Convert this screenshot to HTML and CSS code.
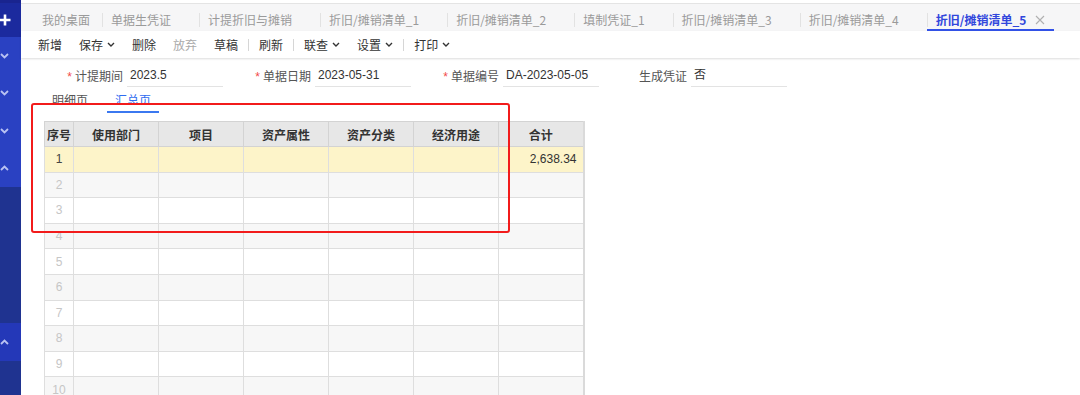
FILE: index.html
```html
<!DOCTYPE html>
<html lang="zh-CN">
<head>
<meta charset="utf-8">
<title>折旧/摊销清单_5</title>
<link rel="stylesheet" href="styles.css">
</head>
<body>
<div class="app">
  <aside class="sidebar">
    <div class="sb-strip"></div>
    <div class="sb-top">
      <svg class="sb-plus" width="12" height="12" viewBox="0 0 12 12"><path d="M5 0.5V11.5M-0.5 6H10.5" stroke="#fff" stroke-width="2.6" fill="none"/></svg>
    </div>
    <div class="sb-bright sb-main">
      <div class="sb-item"><svg width="10" height="6" viewBox="0 0 10 6"><polyline points="1,1 4.5,4.5 8,1" stroke="#b9c2f2" stroke-width="1.8" fill="none"/></svg></div>
      <div class="sb-item"><svg width="10" height="6" viewBox="0 0 10 6"><polyline points="1,1 4.5,4.5 8,1" stroke="#b9c2f2" stroke-width="1.8" fill="none"/></svg></div>
      <div class="sb-item"><svg width="10" height="6" viewBox="0 0 10 6"><polyline points="1,1 4.5,4.5 8,1" stroke="#b9c2f2" stroke-width="1.8" fill="none"/></svg></div>
      <div class="sb-item"><svg width="10" height="6" viewBox="0 0 10 6"><polyline points="1,5 4.5,1.5 8,5" stroke="#b9c2f2" stroke-width="1.8" fill="none"/></svg></div>
    </div>
    <div class="sb-dark sb-gap"></div>
    <div class="sb-bright sb-one">
      <svg width="10" height="6" viewBox="0 0 10 6"><polyline points="1,5 4.5,1.5 8,5" stroke="#b9c2f2" stroke-width="1.8" fill="none"/></svg>
    </div>
    <div class="sb-dark sb-rest"></div>
  </aside>

  <main class="main">
    <nav class="tabbar">
      <div class="tab tab-home">我的桌面</div>
      <div class="tab">单据生凭证<span class="tab-x"></span></div>
      <div class="tab">计提折旧与摊销<span class="tab-x"></span></div>
      <div class="tab">折旧/摊销清单_1<span class="tab-x"></span></div>
      <div class="tab">折旧/摊销清单_2<span class="tab-x"></span></div>
      <div class="tab">填制凭证_1<span class="tab-x"></span></div>
      <div class="tab">折旧/摊销清单_3<span class="tab-x"></span></div>
      <div class="tab">折旧/摊销清单_4<span class="tab-x"></span></div>
      <div class="tab tab-active">折旧/摊销清单_5<span class="tab-x"><svg width="10" height="10" viewBox="0 0 10 10"><path d="M1 1L9 9M9 1L1 9" stroke="#b0b0b0" stroke-width="1.1" fill="none"/></svg></span></div>
    </nav>

    <div class="toolbar">
      <span class="tb-btn">新增</span>
      <span class="tb-btn">保存<svg class="chev" width="8" height="5" viewBox="0 0 8 5"><polyline points="1,1 4,4 7,1" stroke="#333" stroke-width="1.4" fill="none"/></svg></span>
      <span class="tb-btn">删除</span>
      <span class="tb-btn tb-disabled">放弃</span>
      <span class="tb-btn">草稿</span>
      <span class="tb-sep"></span>
      <span class="tb-btn">刷新</span>
      <span class="tb-sep"></span>
      <span class="tb-btn">联查<svg class="chev" width="8" height="5" viewBox="0 0 8 5"><polyline points="1,1 4,4 7,1" stroke="#333" stroke-width="1.4" fill="none"/></svg></span>
      <span class="tb-btn">设置<svg class="chev" width="8" height="5" viewBox="0 0 8 5"><polyline points="1,1 4,4 7,1" stroke="#333" stroke-width="1.4" fill="none"/></svg></span>
      <span class="tb-sep"></span>
      <span class="tb-btn">打印<svg class="chev" width="8" height="5" viewBox="0 0 8 5"><polyline points="1,1 4,4 7,1" stroke="#333" stroke-width="1.4" fill="none"/></svg></span>
    </div>

    <section class="content">
      <div class="form-row">
        <div class="field"><label class="f-label"><span class="req">*</span>计提期间</label><div class="f-input">2023.5</div></div>
        <div class="field"><label class="f-label"><span class="req">*</span>单据日期</label><div class="f-input">2023-05-31</div></div>
        <div class="field"><label class="f-label"><span class="req">*</span>单据编号</label><div class="f-input">DA-2023-05-05</div></div>
        <div class="field"><label class="f-label">生成凭证</label><div class="f-input">否</div></div>
      </div>

      <div class="subtabs">
        <div class="subtab"><span class="st-label">明细页</span></div>
        <div class="subtab subtab-active"><span class="st-label">汇总页</span></div>
      </div>

      <table class="grid">
        <colgroup>
          <col class="c-no"><col class="c-w"><col class="c-w"><col class="c-w"><col class="c-w"><col class="c-w"><col class="c-w">
        </colgroup>
        <thead>
          <tr><th>序号</th><th>使用部门</th><th>项目</th><th>资产属性</th><th>资产分类</th><th>经济用途</th><th>合计</th></tr>
        </thead>
        <tbody>
          <tr class="r-sel"><td class="no">1</td><td></td><td></td><td></td><td></td><td></td><td class="num">2,638.34</td></tr>
          <tr><td class="no">2</td><td></td><td></td><td></td><td></td><td></td><td></td></tr>
          <tr><td class="no">3</td><td></td><td></td><td></td><td></td><td></td><td></td></tr>
          <tr><td class="no">4</td><td></td><td></td><td></td><td></td><td></td><td></td></tr>
          <tr><td class="no">5</td><td></td><td></td><td></td><td></td><td></td><td></td></tr>
          <tr><td class="no">6</td><td></td><td></td><td></td><td></td><td></td><td></td></tr>
          <tr><td class="no">7</td><td></td><td></td><td></td><td></td><td></td><td></td></tr>
          <tr><td class="no">8</td><td></td><td></td><td></td><td></td><td></td><td></td></tr>
          <tr><td class="no">9</td><td></td><td></td><td></td><td></td><td></td><td></td></tr>
          <tr><td class="no">10</td><td></td><td></td><td></td><td></td><td></td><td></td></tr>
          <tr><td class="no">11</td><td></td><td></td><td></td><td></td><td></td><td></td></tr>
        </tbody>
      </table>
    </section>

    <div class="annot-box"></div>
  </main>
</div>
</body>
</html>
```

FILE: styles.css
```css
* { box-sizing: border-box; }
html, body {
  margin: 0;
  padding: 0;
  height: 395px;
  overflow: hidden;
  background: #fff;
}
body {
  font-family: "Liberation Sans", "Noto Sans CJK SC", sans-serif;
  font-size: 12px;
  color: #333;
}
.app {
  display: flex;
  height: 395px;
}

/* sidebar */
.sidebar {
  width: 21px;
  flex: none;
  display: flex;
  flex-direction: column;
  overflow: hidden;
}
.sb-strip { height: 3px; background: #19248f; }
.sb-top {
  height: 34px;
  background: #1b2a9e;
  display: flex;
  align-items: center;
}
.sb-bright { background: #2a41c2; }
.sb-dark { background: #1f3390; }
.sb-main {
  height: 150px;
  display: flex;
  flex-direction: column;
}
.sb-item {
  height: 37.5px;
  display: flex;
  align-items: center;
}
.sb-gap { height: 136px; }
.sb-one {
  height: 38px;
  display: flex;
  align-items: center;
  background: #2438b8;
}
.sb-rest { flex: 1; }

/* main */
.main {
  flex: 1;
  position: relative;
  min-width: 0;
}

.tabbar {
  margin-top: 3px;
  height: 28px;
  border-top: 1px solid #e4e4e4;
  background: #f6f6f7;
  display: flex;
  padding-left: 12px;
}
.tab {
  position: relative;
  height: 27px;
  padding: 8px 9px 0 9px;
  line-height: 16px;
  color: #9a9a9a;
  font-family: "Noto Sans CJK SC", sans-serif;
  white-space: nowrap;
  border-bottom: 2px solid transparent;
  display: flex;
  align-items: flex-start;
}
.tab + .tab::before {
  content: "";
  position: absolute;
  left: 0;
  top: 9px;
  width: 1px;
  height: 14px;
  background: #e2e2e2;
}
.tab-home { padding-right: 12px; }
.tab-x {
  display: inline-flex;
  width: 10px;
  height: 16px;
  margin-left: 9px;
  align-items: center;
}
.tab-active {
  color: #3146dc;
  font-weight: bold;
  border-bottom-color: #3352e8;
}

.toolbar {
  height: 27px;
  display: flex;
  align-items: center;
  padding-left: 9px;
  gap: 1px;
  background: #fff;
  box-shadow: 0 1px 2px rgba(0, 0, 0, 0.14);
  position: relative;
  font-family: "Noto Sans CJK SC", sans-serif;
}
.tb-btn {
  padding: 0 8px;
  color: #333;
  display: inline-flex;
  align-items: center;
  line-height: 16px;
}
.tb-disabled { color: #aaa; }
.chev { margin-left: 4px; }
.tb-sep {
  width: 1px;
  height: 12px;
  margin: 0 1px;
  background: #d6d6d6;
}

.content {
  padding: 7px 0 0 0;
}
.form-row {
  display: flex;
  padding-left: 14px;
  height: 22px;
}
.field {
  display: flex;
  width: 188px;
  height: 22px;
}
.f-label {
  width: 92px;
  padding-right: 4px;
  text-align: right;
  color: #555;
  line-height: 22px;
  font-family: "Noto Sans CJK SC", sans-serif;
}
.req {
  color: #f24a4a;
  margin-right: 3px;
  font-family: "Liberation Sans", sans-serif;
}
.f-input {
  width: 96px;
  height: 22px;
  padding-left: 3px;
  border-bottom: 1px solid #e3e3e3;
  line-height: 21px;
  color: #333;
}

.subtabs {
  display: flex;
  margin-top: 2px;
  padding-left: 23px;
  gap: 11px;
  height: 24px;
}
.subtab {
  height: 24px;
  padding: 0 8px;
  border-bottom: 2px solid transparent;
  color: #555;
  font-family: "Noto Sans CJK SC", sans-serif;
}
.st-label {
  display: block;
  height: 15px;
  padding-top: 5px;
  line-height: 12px;
  overflow: hidden;
}
.subtab-active {
  color: #2f6cf0;
  border-bottom-color: #3b78f0;
}

.grid {
  margin: 8px 0 0 23px;
  border-collapse: collapse;
  table-layout: fixed;
  width: 540px;
  font-family: "Liberation Sans", "Noto Sans CJK SC", sans-serif;
}
.c-no { width: 29px; }
.c-w { width: 85px; }
.grid th {
  height: 25px;
  background: #e7e7e7;
  border: 1px solid #d3d3d3;
  font-weight: bold;
  color: #333;
  text-align: center;
  padding: 0;
  font-family: "Noto Sans CJK SC", sans-serif;
}
.grid td {
  height: 25.6px;
  border: 1px solid #dedede;
  padding: 0 6px;
}
.grid tbody tr:nth-child(even) td { background: #f7f7f7; }
.grid tbody tr.r-sel td { background: #fdf4c9; }
.grid td.no {
  text-align: center;
  color: #c6c6c6;
  padding: 0;
}
.grid tr.r-sel td.no { color: #444; }
.grid td.num { text-align: right; color: #333; }
.grid td:last-child, .grid th:last-child { border-right: 2px solid #dadada; }

.annot-box {
  position: absolute;
  left: 10px;
  top: 103px;
  width: 479px;
  height: 130px;
  border: 2px solid #f21b1b;
  border-radius: 3px;
  pointer-events: none;
}
```
